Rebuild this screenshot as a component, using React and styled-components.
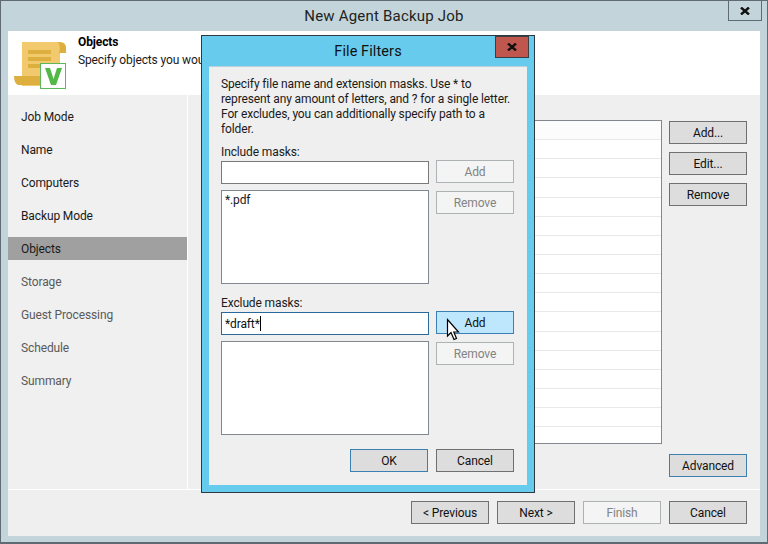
import React from 'react';
import styled, { createGlobalStyle } from 'styled-components';

const GlobalStyle = createGlobalStyle`
  html, body {
    margin: 0;
    padding: 0;
    background: #c3d5da;
  }
  * {
    box-sizing: border-box;
  }
`;

const Window = styled.div`
  position: relative;
  width: 768px;
  height: 544px;
  overflow: hidden;
  display: flex;
  flex-direction: column;
  background: #c3d5da;
  border: 1px solid #5f6a72;
  border-bottom-width: 2px;
  font-family: Roboto, 'Open Sans', sans-serif;
  font-size: 12px;
  letter-spacing: -0.12px;
  color: #1a1a1a;
`;

const TitleBar = styled.div`
  height: 30px;
  flex: none;
  display: grid;
  grid-template-columns: 1fr auto 1fr;
  font-size: 15px;
  letter-spacing: 0.2px;
  line-height: 31px;
  color: #222;
`;

const CloseBox = styled.div`
  justify-self: end;
  width: 34px;
  height: 21px;
  margin-right: 5px;
  margin-top: -1px;
  border: 1px solid ${props => (props.$modal ? '#3a3f44' : '#5f6a72')};
  background: ${props => (props.$modal ? '#c0574e' : 'transparent')};
  display: flex;
  align-items: center;
  justify-content: center;
`;

const Body = styled.div`
  flex: 1;
  margin: 0 7px 6px;
  display: flex;
  flex-direction: column;
  background: #efefef;
`;

const Header = styled.div`
  height: 64px;
  flex: none;
  background: #fff;
  display: flex;
  padding: 11px 0 0 6px;
`;

const HeaderText = styled.div`
  margin-left: 10px;
  margin-top: -7px;
  line-height: 15px;
`;

const HeaderTitle = styled.div`
  font-weight: 700;
  color: #000;
  margin-bottom: 3px;
`;

const Middle = styled.div`
  flex: 1;
  display: flex;
  border-bottom: 1px solid #fff;
`;

const Sidebar = styled.div`
  width: 180px;
  flex: none;
  background: #f0f0f0;
  border-right: 1px solid #fff;
  padding-top: 10px;
  display: flex;
  flex-direction: column;
  gap: 10px;
`;

const NavItem = styled.div`
  height: 23px;
  line-height: 25px;
  padding-left: 13px;
  background: ${props => (props.$active ? '#a0a0a0' : 'transparent')};
  color: ${props => (props.$muted ? '#5a5a5a' : '#1a1a1a')};
`;

const Content = styled.div`
  flex: 1;
  padding: 25px 13px 12px 13px;
  display: grid;
  grid-template-columns: 1fr 78px;
  grid-template-rows: 324px 1fr;
  column-gap: 7px;
  row-gap: 10px;
`;

const ObjectList = styled.div`
  background: #fff;
  border: 1px solid #828790;
  overflow: hidden;
`;

const ListRow = styled.div`
  height: 19.15px;
  border-bottom: 1px solid #e8e8e8;
  background: ${props => (props.$head ? '#fcfcfc' : '#fff')};
`;

const SideButtons = styled.div`
  display: flex;
  flex-direction: column;
  gap: 8px;
  padding-top: 1px;
`;

const Button = styled.div`
  width: 78px;
  height: 23px;
  flex: none;
  display: flex;
  align-items: center;
  justify-content: center;
  padding-top: 1px;
  background: ${props =>
    props.$hover ? '#bee6fd' : props.$disabled ? '#f4f4f4' : '#dddddd'};
  border: 1px solid
    ${props =>
      props.$hover || props.$focus
        ? '#3c7fb1'
        : props.$disabled
          ? '#adb2b5'
          : '#707070'};
  color: ${props => (props.$disabled ? '#838383' : '#111')};
`;

const AdvancedCell = styled.div`
  grid-column: 2;
`;

const Footer = styled.div`
  height: 46px;
  flex: none;
  padding: 11px 13px 0 0;
  display: flex;
  justify-content: flex-end;
  gap: 8px;
`;

const Dialog = styled.div`
  position: absolute;
  left: 200px;
  top: 34px;
  width: 334px;
  height: 458px;
  background: #66cbec;
  border: 1px solid #2d3a42;
  display: flex;
  flex-direction: column;
  padding: 0 7px 7px;
`;

const DialogTitleBar = styled.div`
  height: 30px;
  flex: none;
  display: grid;
  grid-template-columns: 1fr auto 1fr;
  font-size: 14.5px;
  letter-spacing: 0.1px;
  line-height: 31px;
  color: #111;
`;

const DialogClose = styled(CloseBox)`
  margin: 0 -2px 0 0;
  height: 22px;
`;

const DialogBody = styled.div`
  flex: 1;
  background: #efefef;
  border-top: 1px solid #b9d3dc;
  padding: 10px 13px 13px 12px;
  display: flex;
  flex-direction: column;
`;

const Intro = styled.div`
  height: 60px;
  line-height: 15px;
  white-space: nowrap;
`;

const FieldLabel = styled.div`
  height: 15px;
  line-height: 15px;
  margin-top: ${props => props.$top}px;
`;

const MaskGrid = styled.div`
  display: grid;
  grid-template-columns: 208px 78px;
  column-gap: 7px;
`;

const TextInput = styled.div`
  height: 23px;
  margin-top: 1px;
  background: #fff;
  border: 1px solid ${props => (props.$focus ? '#2a6a9a' : '#7a7a7a')};
  padding-left: 3px;
  line-height: 22px;
  color: #111;
`;

const Caret = styled.span`
  display: inline-block;
  width: 1px;
  height: 15px;
  background: #000;
  vertical-align: -3px;
`;

const MaskList = styled.div`
  height: 94px;
  margin-top: 6px;
  background: #fff;
  border: 1px solid #828790;
  padding: 0 3px;
  line-height: 19px;
`;

const RemoveSlot = styled.div`
  margin-top: 8px;
`;

const DialogFooter = styled.div`
  display: flex;
  justify-content: flex-end;
  gap: 8px;
  margin-top: 14px;
`;

const CursorIcon = styled.svg`
  position: absolute;
  left: 445px;
  top: 317px;
`;

const CloseX = () => (
  <svg width="10" height="8" viewBox="0 0 10 8">
    <path d="M1 0.500 L9 7.500 M9 0.500 L1 7.500" stroke="#111" strokeWidth="2.400" fill="none" />
  </svg>
);

const ScrollIcon = () => (
  <svg width="54" height="50" viewBox="0 0 54 50" style={{ flex: 'none' }}>
    <path d="M8 0 H46 Q52 0 52 6 V11 H46 V44 H8 Z" fill="#f2c96d" />
    <path d="M44 0 Q52 0 52 6 V11 H45 Q47 5 44 0 Z" fill="#dcaf3f" />
    <path d="M0 34 H27 V43 H4 Q0 41 0 34 Z" fill="#dcaf3f" />
    <path d="M14 8 H37 V12 H14 Z M14 15 H37 V19 H14 Z M14 22 H37 V26 H14 Z" fill="#dcaf3f" />
    <rect x="26.500" y="21.500" width="25" height="25" fill="#fff" stroke="#5cb85c" />
    <path d="M31 26 H36 L39.500 37 L43 26 H48 L42 43 H37 Z" fill="#52b848" />
  </svg>
);

const navItems = [
  { name: 'Job Mode' },
  { name: 'Name' },
  { name: 'Computers' },
  { name: 'Backup Mode' },
  { name: 'Objects', active: true },
  { name: 'Storage', muted: true },
  { name: 'Guest Processing', muted: true },
  { name: 'Schedule', muted: true },
  { name: 'Summary', muted: true },
];

const rows = Array.from({ length: 17 }, (_, i) => i);

export default function App() {
  return (
    <>
      <GlobalStyle />
      <Window>
        <TitleBar>
          <span />
          <span>New Agent Backup Job</span>
          <CloseBox>
            <CloseX />
          </CloseBox>
        </TitleBar>
        <Body>
          <Header>
            <ScrollIcon />
            <HeaderText>
              <HeaderTitle>Objects</HeaderTitle>
              <div>Specify objects you would like to back up.</div>
            </HeaderText>
          </Header>
          <Middle>
            <Sidebar>
              {navItems.map(item => (
                <NavItem key={item.name} $active={item.active} $muted={item.muted}>
                  {item.name}
                </NavItem>
              ))}
            </Sidebar>
            <Content>
              <ObjectList>
                {rows.map(i => (
                  <ListRow key={i} $head={i === 0} />
                ))}
              </ObjectList>
              <SideButtons>
                <Button>Add...</Button>
                <Button>Edit...</Button>
                <Button>Remove</Button>
              </SideButtons>
              <AdvancedCell>
                <Button $focus>Advanced</Button>
              </AdvancedCell>
            </Content>
          </Middle>
          <Footer>
            <Button>&lt; Previous</Button>
            <Button>Next &gt;</Button>
            <Button $disabled>Finish</Button>
            <Button>Cancel</Button>
          </Footer>
        </Body>

        <Dialog>
          <DialogTitleBar>
            <span />
            <span>File Filters</span>
            <DialogClose $modal>
              <CloseX />
            </DialogClose>
          </DialogTitleBar>
          <DialogBody>
            <Intro>
              Specify file name and extension masks. Use * to
              <br />
              represent any amount of letters, and ? for a single letter.
              <br />
              For excludes, you can additionally specify path to a
              <br />
              folder.
            </Intro>
            <FieldLabel $top={8}>Include masks:</FieldLabel>
            <MaskGrid>
              <div>
                <TextInput />
                <MaskList>*.pdf</MaskList>
              </div>
              <div>
                <Button $disabled>Add</Button>
                <RemoveSlot>
                  <Button $disabled>Remove</Button>
                </RemoveSlot>
              </div>
            </MaskGrid>
            <FieldLabel $top={12}>Exclude masks:</FieldLabel>
            <MaskGrid>
              <div>
                <TextInput $focus>
                  *draft*
                  <Caret />
                </TextInput>
                <MaskList />
              </div>
              <div>
                <Button $hover>Add</Button>
                <RemoveSlot>
                  <Button $disabled>Remove</Button>
                </RemoveSlot>
              </div>
            </MaskGrid>
            <DialogFooter>
              <Button $focus>OK</Button>
              <Button>Cancel</Button>
            </DialogFooter>
          </DialogBody>
        </Dialog>

        <CursorIcon width="14" height="23" viewBox="0 0 14 23">
          <path
            d="M1.500 1.500 V18 L5 14.500 L8 21.500 L10.500 20.500 L7.800 14 H12.500 Z"
            fill="#fff"
            stroke="#000"
            strokeWidth="1.200"
          />
        </CursorIcon>
      </Window>
    </>
  );
}
